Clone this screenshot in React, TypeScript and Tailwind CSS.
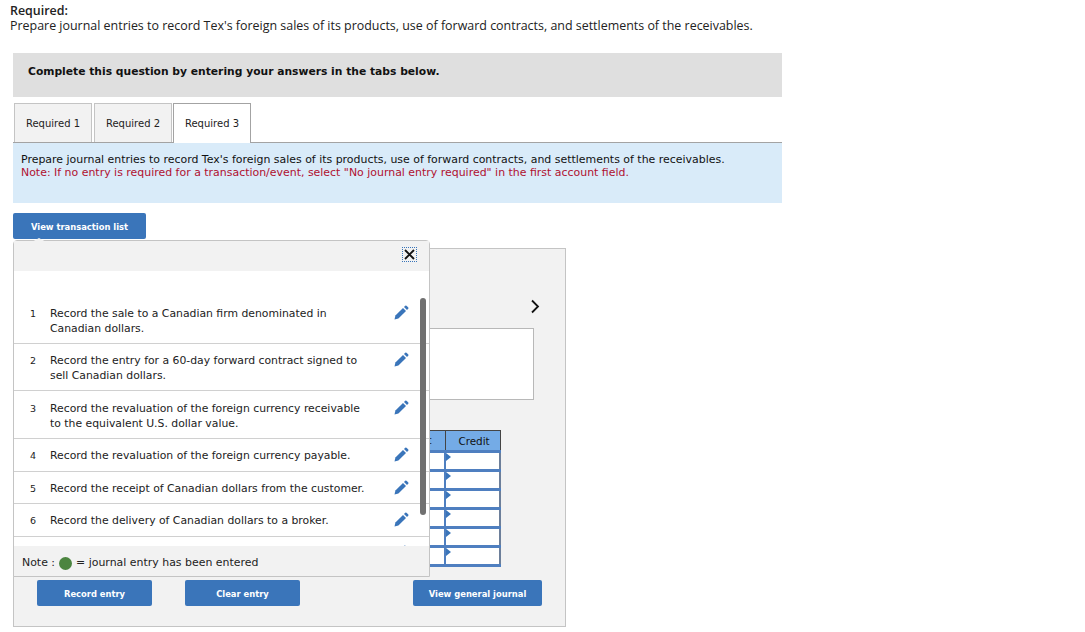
const rows = [
  { n: 1, text: "Record the sale to a Canadian firm denominated in Canadian dollars.", h: "h-[46px]", pt: "pt-[8px]" },
  { n: 2, text: "Record the entry for a 60-day forward contract signed to sell Canadian dollars.", h: "h-[47px]", pt: "pt-[9px]" },
  { n: 3, text: "Record the revaluation of the foreign currency receivable to the equivalent U.S. dollar value.", h: "h-[48px]", pt: "pt-[10px]" },
  { n: 4, text: "Record the revaluation of the foreign currency payable.", h: "h-[33px]", pt: "pt-[9px]" },
  { n: 5, text: "Record the receipt of Canadian dollars from the customer.", h: "h-[32px]", pt: "pt-[9px]" },
  { n: 6, text: "Record the delivery of Canadian dollars to a broker.", h: "h-[33px]", pt: "pt-[9px]" },
];

const tabs = ["Required 1", "Required 2", "Required 3"];
const verdana = "font-['DejaVu_Sans',sans-serif]";
const blueBtn = "rounded-[2px] bg-[#3a75ba] pt-[2px] font-['DejaVu_Sans',sans-serif] text-[8.4px] font-bold text-white";

function Pencil() {
  return (
    <svg width="15" height="15" viewBox="0 0 15 15" className="text-[#3a75ba]">
      <path d="M0.5 14.5 L1.4 10.6 L9 3 L12 6 L4.4 13.6 Z" fill="currentColor" />
      <path d="M10 2 L11.2 0.8 Q12 0.2 12.8 0.9 L14.1 2.2 Q14.8 3 14.2 3.8 L13 5 Z" fill="currentColor" />
    </svg>
  );
}

export default function App() {
  return (
    <div className="min-h-[632px] bg-white pt-[3px] font-['Open_Sans',sans-serif] text-[#222]">
      <div className="pl-[10px] text-[12.45px] leading-[15px]">
        <div className="font-semibold">Required:</div>
        <div>Prepare journal entries to record Tex's foreign sales of its products, use of forward contracts, and settlements of the receivables.</div>
      </div>

      <div className="ml-[13px] w-[769px]">
        <div className={`mt-[20px] flex h-[44px] items-center bg-[#dfdfdf] pb-[6px] pl-[15px] text-[10.74px] font-bold text-[#111] ${verdana}`}>
          Complete this question by entering your answers in the tabs below.
        </div>

        <div className="mt-[6px] flex h-[40px] border-b border-[#a3a3a3]">
          {tabs.map((tab, i) => (
            <div
              key={tab}
              className={
                i === 2
                  ? `flex h-[40px] w-[78px] items-center justify-center border border-b-0 border-[#a3a3a3] bg-white text-[10px] ${verdana}`
                  : `mx-[1px] flex h-[39px] w-[78px] items-center justify-center border border-b-0 border-[#c4c4c4] bg-[#f2f2f2] pt-[1px] text-[10px] ${verdana}`
              }
            >
              {tab}
            </div>
          ))}
        </div>

        <div className={`h-[60px] bg-[#d9ebf9] px-[8px] pt-[10px] text-[10.95px] leading-[13px] text-[#111] ${verdana}`}>
          <div>Prepare journal entries to record Tex's foreign sales of its products, use of forward contracts, and settlements of the receivables.</div>
          <div className="text-[#b01030]">Note: If no entry is required for a transaction/event, select "No journal entry required" in the first account field.</div>
        </div>

        <div className="relative mt-[10px] h-[414px] w-[553px]">
          <button className={`relative z-20 flex h-[26px] w-[133px] items-center justify-center ${blueBtn}`}>
            View transaction list
            <span className="absolute bottom-[-4px] left-[17px] h-0 w-0 border-x-[9px] border-b-[5px] border-x-transparent border-b-[#f2f2f2]" />
          </button>

          <div className="mt-[9px] flex h-[379px] w-[553px] flex-col items-end border border-[#c4c4c4] bg-[#f2f2f2] pt-[79px]">
            <div className="mr-[31px] h-[72px] w-[300px] border border-[#b8b8b8] bg-white" />
            <table className={`mr-[64px] mt-[30px] w-[300px] table-fixed border-collapse text-[10.4px] ${verdana}`}>
              <thead>
                <tr className="h-[21px] bg-[#74abe6]">
                  <th className="border border-[#444] font-normal">General Journal</th>
                  <th className="w-[55px] border border-[#444] font-normal">Debit</th>
                  <th className="w-[55px] border border-[#444] pl-[3px] pt-[2px] font-normal text-[#111]">Credit</th>
                </tr>
              </thead>
              <tbody>
                {[0, 1, 2, 3, 4, 5].map((r) => (
                  <tr key={r} className="h-[19px] bg-white">
                    <td className="border-x-2 border-y-[3px] border-[#4f7fc0]" />
                    <td className="border-x-2 border-y-[3px] border-[#4f7fc0]" />
                    <td className="relative border-x-2 border-y-[3px] border-[#4f7fc0] border-r-[#6d7f9a]">
                      <span className="absolute left-0 top-0 h-0 w-0 border-y-[4px] border-l-[5px] border-y-transparent border-l-[#3a75ba]" />
                    </td>
                  </tr>
                ))}
              </tbody>
            </table>
            <div className="mr-[23px] mt-[13px] flex w-[505px] items-center justify-between">
              <div className="flex gap-[33px]">
                <button className={`h-[26px] w-[115px] ${blueBtn}`}>Record entry</button>
                <button className={`h-[26px] w-[115px] ${blueBtn}`}>Clear entry</button>
              </div>
              <button className={`h-[26px] w-[129px] ${blueBtn}`}>View general journal</button>
            </div>
            <svg className="absolute left-[517px] top-[86px]" width="10" height="15" viewBox="0 0 10 15">
              <polyline points="2,1.5 8,7.5 2,13.5" fill="none" stroke="#111" strokeWidth="1.8" />
            </svg>
          </div>

          <div className="absolute left-0 top-[27px] z-10 flex h-[337px] w-[417px] flex-col rounded-t-[4px] border border-[#c4c4c4] bg-white">
            <div className="flex h-[30px] shrink-0 items-start justify-end bg-[#f2f2f2] pr-[13px] pt-[7px]">
              <span className="flex h-[13px] w-[13px] items-center justify-center outline-1 outline-dotted outline-[#3a75ba]">
                <svg width="11" height="11" viewBox="0 0 11 11">
                  <path d="M1 1 L10 10 M10 1 L1 10" stroke="#111" strokeWidth="1.8" />
                </svg>
              </span>
            </div>
            <div className="relative h-[275px] shrink-0 overflow-hidden pt-[27px]">
              {rows.map((row) => (
                <div key={row.n} className={`flex ${row.h} border-b border-[#d0d0d0] ${row.pt} text-[10.84px] leading-[15px] text-[#222] ${verdana}`}>
                  <span className="w-[36px] shrink-0 pl-[16px] text-[9.5px]">{row.n}</span>
                  <span className="w-[318px] shrink-0">{row.text}</span>
                  <span className="ml-[26px] mt-[-1px]">
                    <Pencil />
                  </span>
                </div>
              ))}
              <div className="flex h-[33px] justify-end pr-[21px] pt-[8px]">
                <Pencil />
              </div>
              <div className="absolute right-[3px] top-[27px] h-[217px] w-[6px] rounded-full bg-[#707070]" />
            </div>
            <div className={`flex h-[30px] shrink-0 items-center gap-[4px] bg-[#f2f2f2] pl-[8px] pt-[4px] text-[10.95px] text-[#222] ${verdana}`}>
              Note :
              <span className="h-[13px] w-[13px] rounded-full bg-[#4c8540]" />
              = journal entry has been entered
            </div>
          </div>
        </div>
      </div>
    </div>
  );
}
